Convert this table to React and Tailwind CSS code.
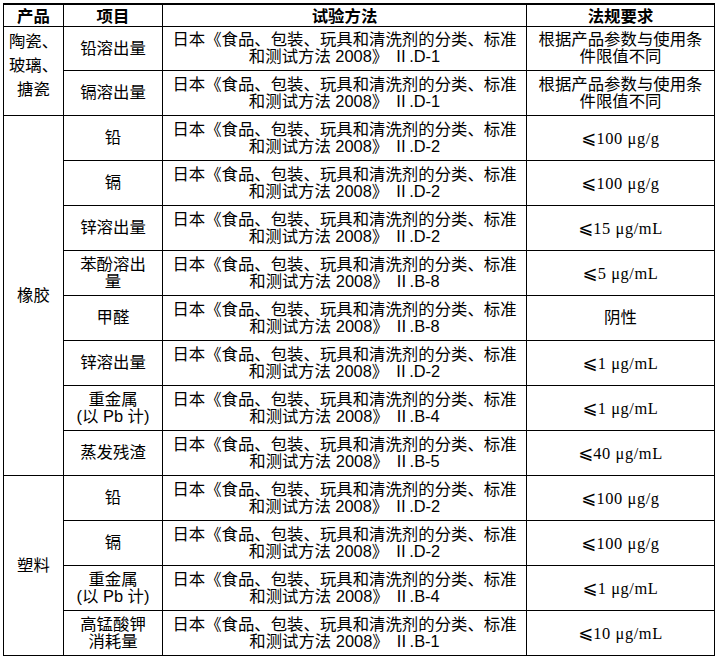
import React from "react";

const M1 = "日本《食品、包装、玩具和清洗剂的分类、标准";
const m2 = (code) => `和测试方法 2008》 Ⅱ.${code}`;

const Limit = ({ v }) => (
  <span>
    <span className="font-['DejaVu_Sans',sans-serif] text-[18px] leading-[17px]">⩽</span>
    <span className="font-['Liberation_Serif','Noto_Sans_CJK_SC',serif] tracking-[0.6px]">{v}</span>
  </span>
);

const groups = [
  {
    prod: (
      <div className="leading-[24px] pb-[12px]">
        陶瓷、
        <br />
        玻璃、
        <br />
        搪瓷
      </div>
    ),
    rows: [
      { item: "铅溶出量", code: "D-1", req: <>根据产品参数与使用条<br />件限值不同</> },
      { item: "镉溶出量", code: "D-1", req: <>根据产品参数与使用条<br />件限值不同</> },
    ],
  },
  {
    prod: "橡胶",
    rows: [
      { item: "铅", code: "D-2", req: <Limit v="100 μg/g" /> },
      { item: "镉", code: "D-2", req: <Limit v="100 μg/g" /> },
      { item: "锌溶出量", code: "D-2", req: <Limit v="15 μg/mL" /> },
      { item: <>苯酚溶出<br />量</>, code: "B-8", req: <Limit v="5 μg/mL" /> },
      { item: "甲醛", code: "B-8", req: "阴性" },
      { item: "锌溶出量", code: "D-2", req: <Limit v="1 μg/mL" /> },
      { item: <>重金属<br />(以 Pb 计)</>, code: "B-4", req: <Limit v="1 μg/mL" /> },
      { item: "蒸发残渣", code: "B-5", req: <Limit v="40 μg/mL" /> },
    ],
  },
  {
    prod: "塑料",
    rows: [
      { item: "铅", code: "D-2", req: <Limit v="100 μg/g" /> },
      { item: "镉", code: "D-2", req: <Limit v="100 μg/g" /> },
      { item: <>重金属<br />(以 Pb 计)</>, code: "B-4", req: <Limit v="1 μg/mL" /> },
      { item: <>高锰酸钾<br />消耗量</>, code: "B-1", req: <Limit v="10 μg/mL" /> },
    ],
  },
];

export default function App() {
  let idx = 0;
  return (
    <div className="w-[716px] h-[658px] bg-white pt-[3px] pl-[3px] font-['Liberation_Sans','Noto_Sans_CJK_SC',sans-serif] text-[16.4px] text-black">
      <table className="border-collapse table-fixed w-[711px] border-t-2 border-black">
        <colgroup>
          <col className="w-[60px]" />
          <col className="w-[99px]" />
          <col className="w-[364px]" />
          <col className="w-[188px]" />
        </colgroup>
        <thead>
          <tr className="h-[22px]">
            {["产品", "项目", "试验方法", "法规要求"].map((h) => (
              <th
                key={h}
                className="border border-black p-0 text-center font-bold leading-[18px] font-['Noto_Sans_CJK_SC',sans-serif]"
              >
                {h}
              </th>
            ))}
          </tr>
        </thead>
        <tbody>
          {groups.map((g, gi) =>
            g.rows.map((r, ri) => {
              const first = idx === 0;
              idx++;
              return (
                <tr key={`${gi}-${ri}`} className={first ? "h-[44px]" : "h-[45px]"}>
                  {ri === 0 && (
                    <td
                      rowSpan={g.rows.length}
                      className="border border-black p-0 text-center align-middle leading-[17px]"
                    >
                      {g.prod}
                    </td>
                  )}
                  <td className="border border-black px-[8px] py-0 text-center align-middle leading-[17px]">
                    {r.item}
                  </td>
                  <td className="border border-black px-[8px] py-0 text-center align-middle leading-[17px] whitespace-nowrap">
                    {M1}
                    <br />
                    {m2(r.code)}
                  </td>
                  <td className="border border-black px-[8px] py-0 text-center align-middle leading-[17px] whitespace-nowrap">
                    {r.req}
                  </td>
                </tr>
              );
            })
          )}
        </tbody>
      </table>
    </div>
  );
}
